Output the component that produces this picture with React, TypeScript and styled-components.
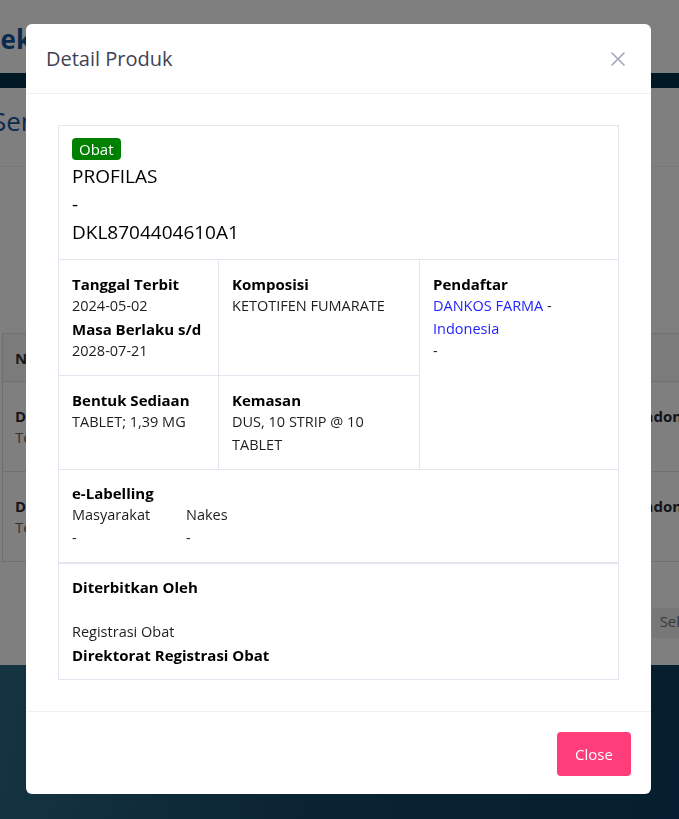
import React from "react";
import styled, { createGlobalStyle } from "styled-components";

const GlobalStyle = createGlobalStyle`
  html, body {
    margin: 0;
    padding: 0;
    background: #ffffff;
  }
  body {
    font-family: "Open Sans", "Noto Sans", sans-serif;
    overflow: hidden;
  }
`;

// ---- page behind the modal ----
const Page = styled.div`
  width: 679px;
  height: 819px;
  display: flex;
  flex-direction: column;
  overflow: hidden;
`;

const TopBar = styled.div`
  height: 73px;
  display: flex;
  align-items: center;
  padding-top: 4px;
  box-sizing: border-box;
`;

const Brand = styled.h1`
  margin: 0 0 0 -16px;
  font-size: 26px;
  font-weight: 700;
  color: #14559e;
`;

const NavStripe = styled.div`
  height: 15px;
  background: #003349;
`;

const SectionHead = styled.div`
  height: 78px;
  display: flex;
  align-items: center;
  border-bottom: 1px solid #ececec;
`;

const SectionTitle = styled.h2`
  margin: 0 0 12px -8px;
  font-size: 26px;
  font-weight: 500;
  color: #14559e;
`;

const Spacer = styled.div`
  height: 166px;
`;

const Table = styled.div`
  margin: 0 -46px 0 2px;
  border: 1px solid #e0e0e0;
`;

const TableRow = styled.div<{ $head?: boolean }>`
  display: flex;
  justify-content: space-between;
  height: ${(p) => (p.$head ? "47px" : "90px")};
  padding: ${(p) => (p.$head ? "0 12px" : "24px 12px 0")};
  box-sizing: border-box;
  background: ${(p) => (p.$head ? "#f7f7f7" : "#ffffff")};
  border-top: 1px solid #e0e0e0;
  align-items: ${(p) => (p.$head ? "center" : "flex-start")};
  font-size: 15px;
  color: #333;
  &:first-child {
    border-top: none;
  }
`;

const RowName = styled.div`
  display: flex;
  flex-direction: column;
  line-height: 21px;
  b {
    color: #2b2b33;
  }
  span {
    color: #666;
  }
`;

const RowSide = styled.b`
  color: #2b2b33;
  line-height: 21px;
`;

const Pager = styled.div`
  display: flex;
  justify-content: flex-end;
  padding-top: 46px;
  height: 103px;
  box-sizing: border-box;
`;

const PagerButton = styled.div`
  margin-right: -70px;
  padding: 3px 8px;
  height: 24px;
  border-radius: 4px;
  background: #eeeeee;
  color: #777;
  font-size: 15px;
`;

const Footer = styled.div`
  flex: 1;
  background: linear-gradient(100deg, #2b6a85 0%, #154866 45%, #0c3d5e 100%);
`;

// ---- overlay + modal ----
const Backdrop = styled.div`
  position: fixed;
  inset: 0;
  background: rgba(0, 0, 0, 0.5);
`;

const Modal = styled.div`
  position: fixed;
  left: 26px;
  top: 24px;
  width: 625px;
  background: #ffffff;
  border-radius: 6px;
  display: flex;
  flex-direction: column;
`;

const ModalHeader = styled.div`
  height: 70px;
  display: flex;
  align-items: center;
  justify-content: space-between;
  padding: 0 26px 0 20px;
  border-bottom: 1px solid #eff2f5;
  box-sizing: border-box;
`;

const ModalTitle = styled.h5`
  margin: 0 0 1px;
  font-size: 20px;
  font-weight: 500;
  color: #3f4254;
`;

const CloseIcon = styled.svg`
  width: 14px;
  height: 14px;
  color: #a1a5b7;
`;

const ModalBody = styled.div`
  padding: 31px 32px 31px;
`;

const Card = styled.div`
  border: 1px solid #e4e6ef;
  color: #181c32;
  font-size: 14.5px;
  line-height: 22.5px;
`;

const Headline = styled.div`
  padding: 12px 13px 13px;
  border-bottom: 1px solid #e4e6ef;
`;

const Badge = styled.span`
  display: inline-block;
  background: #008000;
  color: #ffffff;
  border-radius: 4px;
  padding: 0 7px;
  height: 22px;
  line-height: 22px;
  font-size: 15px;
`;

const Big = styled.div`
  font-size: 19px;
  line-height: 28px;
  font-weight: 500;
  color: #000;
`;

const InfoGrid = styled.div`
  display: grid;
  grid-template-columns: 160px 201px 1fr;
  grid-template-rows: 116px 93px;
`;

const Cell = styled.div<{ $tall?: boolean; $right?: boolean; $bottom?: boolean }>`
  padding: 13px;
  box-sizing: border-box;
  grid-row: ${(p) => (p.$tall ? "1 / 3" : "auto")};
  grid-column: ${(p) => (p.$tall ? "3" : "auto")};
  border-right: ${(p) => (p.$right ? "1px solid #e4e6ef" : "none")};
  border-bottom: ${(p) => (p.$bottom ? "1px solid #e4e6ef" : "none")};
`;

const Label = styled.div`
  font-weight: 700;
  font-size: 15px;
  color: #000;
`;

const Value = styled.div`
  color: #1e1e1e;
`;

const Link = styled.a`
  color: #2424ff;
  text-decoration: none;
`;

const Section = styled.div<{ $thick?: boolean }>`
  padding: 12px 13px 13px;
  border-top: ${(p) => (p.$thick ? "2px" : "1px")} solid #e4e6ef;
`;

const LabelCols = styled.div`
  display: flex;
`;

const LabelCol = styled.div`
  width: 114px;
`;

const ModalFooter = styled.div`
  height: 83px;
  border-top: 1px solid #eff2f5;
  display: flex;
  align-items: center;
  justify-content: flex-end;
  padding: 0 20px;
  box-sizing: border-box;
`;

const CloseButton = styled.button`
  height: 44px;
  width: 74px;
  border: none;
  border-radius: 4px;
  background: #ff3d7a;
  color: #ffffff;
  font-family: inherit;
  font-size: 15px;
  margin-top: 1px;
`;

export default function App() {
  return (
    <>
      <GlobalStyle />
      <Page>
        <TopBar>
          <Brand>Cek Produk</Brand>
        </TopBar>
        <NavStripe />
        <SectionHead>
          <SectionTitle>Semua Produk</SectionTitle>
        </SectionHead>
        <Spacer />
        <Table>
          <TableRow $head>
            <b>No</b>
          </TableRow>
          <TableRow>
            <RowName>
              <b>DKL8704404610A1</b>
              <span>Tersedia</span>
            </RowName>
            <RowSide>Indonesia</RowSide>
          </TableRow>
          <TableRow>
            <RowName>
              <b>DKL8704404610A1</b>
              <span>Tersedia</span>
            </RowName>
            <RowSide>Indonesia</RowSide>
          </TableRow>
        </Table>
        <Pager>
          <PagerButton>Selanjutnya</PagerButton>
        </Pager>
        <Footer />
      </Page>
      <Backdrop />
      <Modal>
        <ModalHeader>
          <ModalTitle>Detail Produk</ModalTitle>
          <CloseIcon viewBox="0 0 14 14" fill="none" stroke="currentColor" strokeWidth="1.6" strokeLinecap="round">
            <path d="M1 1 L13 13 M13 1 L1 13" />
          </CloseIcon>
        </ModalHeader>
        <ModalBody>
          <Card>
            <Headline>
              <Badge>Obat</Badge>
              <Big>PROFILAS</Big>
              <Big>-</Big>
              <Big>DKL8704404610A1</Big>
            </Headline>
            <InfoGrid>
              <Cell $right $bottom>
                <Label>Tanggal Terbit</Label>
                <Value>2024-05-02</Value>
                <Label>Masa Berlaku s/d</Label>
                <Value>2028-07-21</Value>
              </Cell>
              <Cell $right $bottom>
                <Label>Komposisi</Label>
                <Value>KETOTIFEN FUMARATE</Value>
              </Cell>
              <Cell $tall>
                <Label>Pendaftar</Label>
                <Value>
                  <Link href="#">DANKOS FARMA</Link> -{" "}
                  <Link href="#">Indonesia</Link>
                </Value>
                <Value>-</Value>
              </Cell>
              <Cell $right>
                <Label>Bentuk Sediaan</Label>
                <Value>TABLET; 1,39 MG</Value>
              </Cell>
              <Cell $right>
                <Label>Kemasan</Label>
                <Value>DUS, 10 STRIP @ 10 TABLET</Value>
              </Cell>
            </InfoGrid>
            <Section>
              <Label>e-Labelling</Label>
              <LabelCols>
                <LabelCol>
                  <Value>Masyarakat</Value>
                  <Value>-</Value>
                </LabelCol>
                <LabelCol>
                  <Value>Nakes</Value>
                  <Value>-</Value>
                </LabelCol>
              </LabelCols>
            </Section>
            <Section $thick>
              <Label>Diterbitkan Oleh</Label>
              <Value>&nbsp;</Value>
              <Value>Registrasi Obat</Value>
              <Label>Direktorat Registrasi Obat</Label>
            </Section>
          </Card>
        </ModalBody>
        <ModalFooter>
          <CloseButton>Close</CloseButton>
        </ModalFooter>
      </Modal>
    </>
  );
}
